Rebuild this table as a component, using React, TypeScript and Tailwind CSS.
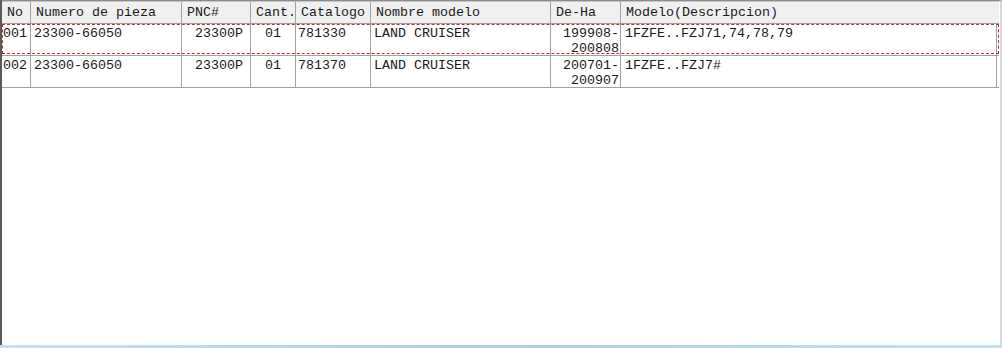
import React from "react";

type Col = {
  key: string;
  label: string;
  width: string;
  align: "left" | "right" | "center";
  cellPad: string;
};

const cols: Col[] = [
  { key: "no", label: "No", width: "w-[29px]", align: "left", cellPad: "pl-[1px]" },
  { key: "part", label: "Numero de pieza", width: "w-[151px]", align: "left", cellPad: "pl-[3px]" },
  { key: "pnc", label: "PNC#", width: "w-[69px]", align: "right", cellPad: "pr-[7px]" },
  { key: "qty", label: "Cant.", width: "w-[45px]", align: "center", cellPad: "" },
  { key: "cat", label: "Catalogo", width: "w-[75px]", align: "left", cellPad: "pl-[2px]" },
  { key: "model", label: "Nombre modelo", width: "w-[180px]", align: "left", cellPad: "pl-[3px]" },
  { key: "range", label: "De-Ha", width: "w-[70px]", align: "right", cellPad: "pr-[1px]" },
  { key: "desc", label: "Modelo(Descripcion)", width: "w-[376px]", align: "left", cellPad: "pl-[4px]" },
];

const rows: Record<string, string[]>[] = [
  {
    no: ["001"],
    part: ["23300-66050"],
    pnc: ["23300P"],
    qty: ["01"],
    cat: ["781330"],
    model: ["LAND CRUISER"],
    range: ["199908-", "200808"],
    desc: ["1FZFE..FZJ71,74,78,79"],
  },
  {
    no: ["002"],
    part: ["23300-66050"],
    pnc: ["23300P"],
    qty: ["01"],
    cat: ["781370"],
    model: ["LAND CRUISER"],
    range: ["200701-", "200907"],
    desc: ["1FZFE..FZJ7#"],
  },
];

const alignClass = {
  left: "text-left",
  right: "text-right",
  center: "text-center",
};

export default function App() {
  return (
    <div
      className="w-[1002px] h-[348px] bg-white flex flex-col text-[13.33px] text-[#1a1a1a]"
      style={{ fontFamily: '"Liberation Mono", "Courier New", monospace' }}
    >
      <div className="flex-1 border-l-2 border-l-[#5a5a5a] border-t border-t-[#8a8a8a] border-r-2 border-r-[#d8d8d8] bg-white">
        {/* header */}
        <div className="flex h-[23px] bg-[#f0f0f0] border-t border-[#c8c8c8] border-b border-b-[#a0a0a0] w-[997px]">
          {cols.map((c, i) => (
            <div
              key={c.key}
              className={`${c.width} shrink-0 flex items-center pl-[5px] leading-none whitespace-nowrap overflow-hidden ${
                i < cols.length - 1 ? "border-r border-[#a0a0a0]" : ""
              }`}
            >
              {c.label}
            </div>
          ))}
        </div>

        {/* rows */}
        {rows.map((r, ri) => (
          <div
            key={ri}
            className={`relative flex h-[32px] border-b border-[#a0a0a0] ${ri === 1 ? "w-[997px]" : "w-[997px]"}`}
          >
            {cols.map((c) => (
              <div
                key={c.key}
                className={`${c.width} shrink-0 border-r border-[#a0a0a0] pt-[2px] leading-[15px] whitespace-nowrap overflow-hidden ${alignClass[c.align]} ${c.cellPad}`}
              >
                {r[c.key].map((line, li) => (
                  <div key={li}>{line}</div>
                ))}
              </div>
            ))}
            {ri === 0 && (
              <div className="absolute inset-0 bottom-[1px] border border-dashed border-[#b8302c] pointer-events-none" />
            )}
          </div>
        ))}
      </div>
      <div className="h-[3px] bg-gradient-to-r from-[#c6e2ee] via-[#a9cfe0] to-[#c3e3ea]" />
    </div>
  );
}
